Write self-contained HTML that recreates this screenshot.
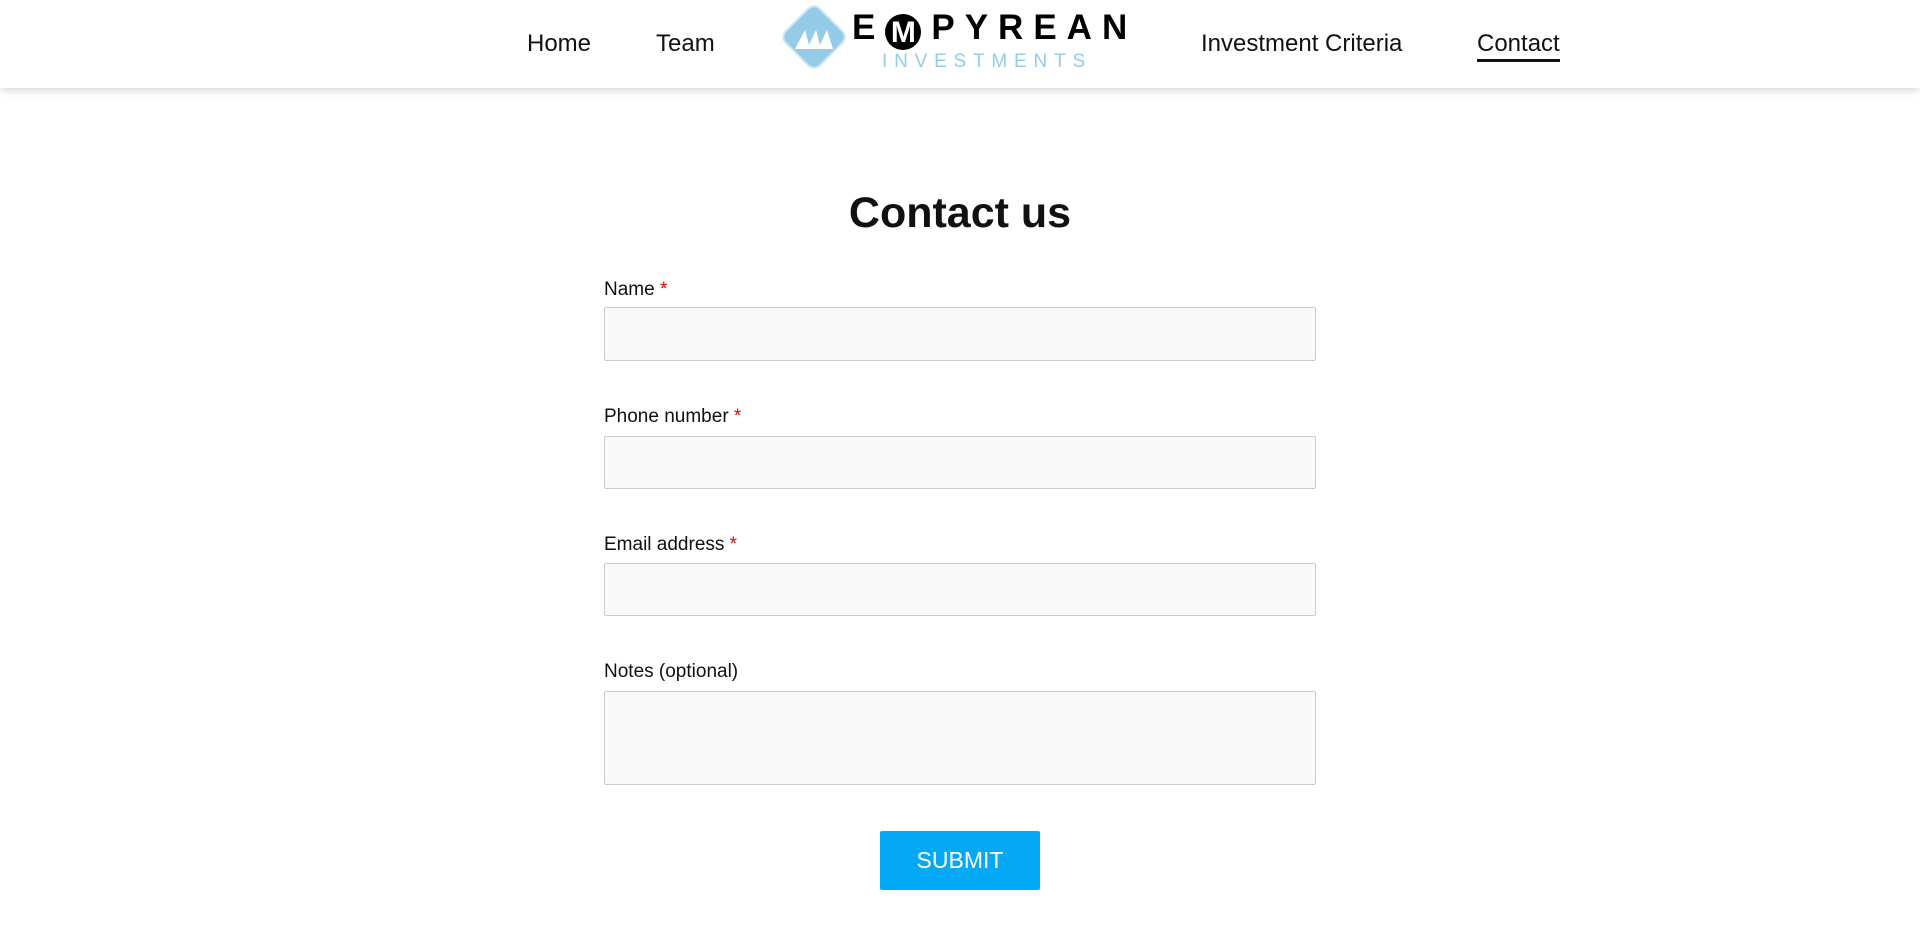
<!DOCTYPE html>
<html><head><meta charset="utf-8"><style>
*{box-sizing:border-box;margin:0;padding:0}
body{width:1920px;height:941px;background:#fff;font-family:"Liberation Sans",Arial,sans-serif;color:#111;position:relative;overflow:hidden}
header{position:absolute;left:0;top:0;width:1920px;height:88px;background:#fff;box-shadow:0 2px 8px rgba(0,0,0,.18);z-index:2}
.nav{position:absolute;top:30px;font-size:24px;color:#111}
.u{border-bottom:3px solid #111;padding-bottom:2px}
h1{position:absolute;left:0;width:1920px;text-align:center;top:189px;font-size:43px;font-weight:bold}
label{position:absolute;left:604px;font-size:19px}
label b{color:#e00;font-weight:normal}
.in{position:absolute;left:604px;width:712px;background:#f9f9f9;border:1px solid #ccc;border-radius:2px}
.btn{position:absolute;left:880px;top:831px;width:160px;height:59px;background:#03a9f4;color:#fff;font-size:23px;text-align:center;line-height:59px;border-radius:2px}
</style></head><body>
<header>
<div class="nav" style="left:527px">Home</div>
<div class="nav" style="left:656px">Team</div>
<svg style="position:absolute;left:779px;top:2px" width="70" height="70" viewBox="0 0 70 70">
<rect x="11" y="11" width="48" height="48" rx="8" transform="rotate(45 35 35)" fill="#94cce8" stroke="#c9e6f4" stroke-width="2"/>
<polygon points="16,47 26,28 31,47" fill="#fff"/><polygon points="28,47 37,28 42,47" fill="#fff"/><polygon points="39,47 48,28 54,47" fill="#fff"/>
</svg>
<div style="position:absolute;left:852px;top:8px;font-size:35px;font-weight:bold;letter-spacing:10px;color:#000;white-space:nowrap">E<span style="display:inline-block;width:36px;height:36px;border-radius:50%;background:#000;color:#fff;text-align:center;line-height:38px;letter-spacing:0;font-size:30px;margin-right:10px;vertical-align:-3px">M</span>PYREAN</div>
<div style="position:absolute;left:882px;top:51px;font-size:19px;letter-spacing:6.8px;color:#94cce8;white-space:nowrap">INVESTMENTS</div>
<div class="nav" style="left:1201px">Investment Criteria</div>
<div class="nav" style="left:1477px"><span class="u">Contact</span></div>
</header>
<h1>Contact us</h1>
<label style="top:279px">Name <b>*</b></label>
<div class="in" style="top:307px;height:54px"></div>
<label style="top:406px">Phone number <b>*</b></label>
<div class="in" style="top:436px;height:53px"></div>
<label style="top:534px">Email address <b>*</b></label>
<div class="in" style="top:563px;height:53px"></div>
<label style="top:661px">Notes (optional)</label>
<div class="in" style="top:691px;height:94px"></div>
<div class="btn">SUBMIT</div>
</body></html>
